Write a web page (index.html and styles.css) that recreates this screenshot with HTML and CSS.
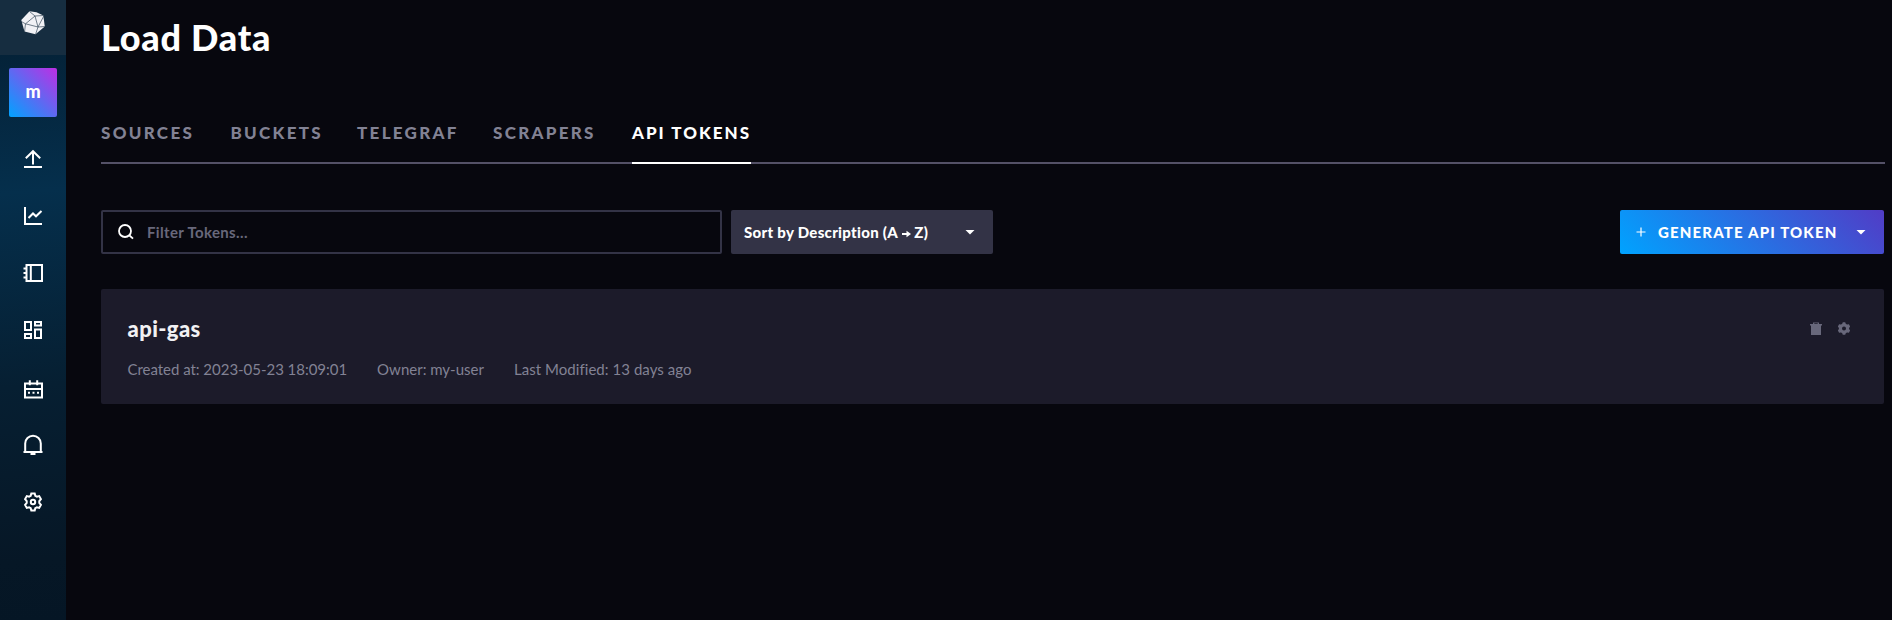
FILE: index.html
```html
<!DOCTYPE html>
<html lang="en">
<head>
<meta charset="utf-8">
<title>Load Data</title>
<link rel="stylesheet" href="styles.css">
</head>
<body>
<div class="app">
  <nav class="sidebar">
    <a class="logo">
      <svg width="24" height="24" viewBox="0 0 24 24">
        <path fill="#f1f1f5" d="M8.500.2 15.500 1.200 22.300 4.500 23.800 15.500 14.500 23.300 3.500 20.500.3 9z"/>
        <path fill="none" stroke="#37495a" stroke-width=".7" d="M8.500.5 14 5 22.800 4.500M14 5 4.500 12.800 17 16 14 5M.3 10.500 4.500 12.800 3.500 21M17 16 24 15.500M17 16 14.500 23.500M17 16 22.800 5"/>
      </svg>
    </a>
    <div class="avatar">m</div>
    <div class="nav-items">
      <a class="nav-item"><svg width="20" height="20" viewBox="0 0 20 20"><path d="M1 18h18M10 15.500V2.500M2.800 9.200 10 2.200l7.200 7"/></svg></a>
      <a class="nav-item"><svg width="20" height="20" viewBox="0 0 20 20"><path d="M2 1v17h17M5.500 12 10 7.500l3 2.800L18.500 5"/></svg></a>
      <a class="nav-item"><svg width="20" height="20" viewBox="0 0 20 20"><path d="M3.500 2H19v16H3.500zM7.800 2v16M.5 5.500h3M.5 10h3M.5 14.500h3"/></svg></a>
      <a class="nav-item"><svg width="20" height="20" viewBox="0 0 20 20"><path d="M2 2h6v8H2zM12 2h6v3.600h-6zM12 9.500h6V18h-6zM2 14h6v4H2z"/></svg></a>
      <a class="nav-item calendar"><svg width="20" height="20" viewBox="0 0 20 20"><path d="M2 3.500h17v14H2zM2 9h17M6.800 .3v5M14.200.3v5M5 12.700h2M9.500 12.700h2M14 12.700h2"/></svg></a>
      <a class="nav-item"><svg width="20" height="20" viewBox="0 0 20 20"><path d="M.5 17h19M2.200 17V8.500a7.800 7.800 0 0 1 15.600 0V17M7.500 19h5"/></svg></a>
      <a class="nav-item"><svg width="20" height="20" viewBox="0 0 20 20"><path d="M8.300 1.500h3.400l.6 2.300 1.600.9 2.300-.6 1.700 3-1.600 1.900v2l1.600 1.900-1.700 3-2.300-.6-1.600.9-.6 2.300H8.300l-.6-2.300-1.600-.9-2.300.6-1.700-3L3.700 11V9L2.100 7.100l1.700-3 2.300.6 1.600-.9z"/><circle cx="10" cy="10" r="2.200"/></svg></a>
    </div>
  </nav>
  <main class="page">
    <h1 class="title">Load Data</h1>
    <div class="tabs">
      <a class="tab">SOURCES</a>
      <a class="tab">BUCKETS</a>
      <a class="tab">TELEGRAF</a>
      <a class="tab">SCRAPERS</a>
      <a class="tab active">API TOKENS</a>
    </div>
    <div class="toolbar">
      <div class="search">
        <svg width="16" height="16" viewBox="0 0 16 16"><circle cx="7" cy="7" r="6"/><path d="m11 11 4 3.600"/></svg>
        <span>Filter Tokens...</span>
      </div>
      <div class="sort">
        <span class="sort-label">Sort by Description (A <svg class="arrow" width="9" height="8" viewBox="0 0 9 8"><path d="M0 4h6" stroke="#fff" stroke-width="2"/><path d="M4.500.8 9 4 4.500 7.200z" fill="#fff"/></svg> Z)</span>
        <span class="caret"></span>
      </div>
      <button class="generate">
        <svg class="plus" width="10" height="10" viewBox="0 0 10 10"><path d="M5 .5v9M.5 5h9"/></svg>
        <span class="generate-label">GENERATE API TOKEN</span>
        <span class="caret"></span>
      </button>
    </div>
    <section class="card">
      <div class="card-body">
        <h2 class="card-title">api-gas</h2>
        <div class="meta">
          <span class="created">Created at: 2023-05-23 18:09:01</span>
          <span>Owner: my-user</span>
          <span class="modified">Last Modified: 13 days ago</span>
        </div>
      </div>
      <div class="actions">
        <svg width="12" height="13" viewBox="0 0 12 13"><path d="M0 2h3V.5h6V2h3v1.500H0zM4.300 1.300V2h3.400v-.7zM1 3.500h10V13H1z"/></svg>
        <svg width="12" height="13" viewBox="0 0 12 13"><path fill-rule="evenodd" d="M4.800.3h2.400L7.900 2l1.300.6 1.700-.3 1.200 2.100-1 1.500v1.200l1 1.500-1.200 2.100-1.700-.3-1.300.6-.7 1.700H4.800L4.100 11l-1.300-.6-1.700.3L-.1 8.600l1-1.500V5.900l-1-1.500 1.200-2.100 1.700.3L4.100 2zM6 4.500a2 2 0 1 0 0 4 2 2 0 0 0 0-4z"/></svg>
      </div>
    </section>
  </main>
</div>
</body>
</html>
```
FILE: styles.css
```css
* { box-sizing: border-box; }
body { margin: 0; background: #07070e; font-family: Lato, "Open Sans", sans-serif; color: #fff; }
.app { display: flex; height: 620px; overflow: hidden; }

.sidebar { flex: none; width: 66px; background: linear-gradient(175deg, #062236 0%, #042238 8%, #052f4c 31%, #061f32 62%, #061726 90%, #051625 100%); }
.logo { display: flex; justify-content: center; height: 55px; padding-top: 11px; background: #162d40; }
.avatar { display: flex; align-items: center; justify-content: center; width: 48px; height: 49px; margin: 13px 9px 0; padding-bottom: 3px; border-radius: 2px; background: linear-gradient(45deg, #00a3ff, #be2ee4); font-size: 18px; font-weight: 900; }
.nav-items { display: grid; grid-auto-rows: 57.200px; padding-top: 13px; }
.nav-item { display: flex; align-items: center; justify-content: center; }
.nav-item svg { overflow: visible; fill: none; stroke: #fff; stroke-width: 2; }
.calendar { padding-top: 5px; }

.page { flex: none; width: 1784px; margin-left: 35px; }
.title { margin: 15px 0 0; font-size: 36px; line-height: 44px; font-weight: 900; letter-spacing: .75px; white-space: nowrap; }
.tabs { display: grid; grid-template-columns: 129.500px 126.500px 136px 139px 119px; height: 61px; margin-top: 44px; border-bottom: 2px solid #545167; }
.tab { height: 61px; padding-top: 18px; font-size: 17px; line-height: 24px; font-weight: 900; letter-spacing: 2.300px; color: #828294; white-space: nowrap; }
.tab.active { color: #fff; border-bottom: 2px solid #fff; letter-spacing: 2px; }
.toolbar { display: flex; width: 1783px; height: 44px; margin-top: 46px; }
.search { display: flex; align-items: center; width: 621px; padding-left: 15px; border: 2px solid #333346; border-radius: 2px; font-size: 15px; font-weight: 700; letter-spacing: .35px; color: #68687b; }
.search svg { margin-right: 13px; fill: none; stroke: #fff; stroke-width: 1.800; }
.sort { display: flex; align-items: center; justify-content: space-between; width: 262px; margin-left: 9px; padding: 0 18px 0 13px; border-radius: 2px; background: #333346; font-size: 15px; font-weight: 900; letter-spacing: .3px; white-space: nowrap; }
.caret { width: 10px; height: 5px; background: #fff; clip-path: polygon(0 0, 100% 0, 50% 100%); }
.generate { display: flex; align-items: center; width: 264px; margin-left: auto; padding: 0 18px 0 16px; border: 0; border-radius: 2px; background: linear-gradient(45deg, #00a3ff, #513cc6); color: #fff; font: 900 15px Lato, "Open Sans", sans-serif; letter-spacing: 1.150px; white-space: nowrap; }
.plus { margin-right: 12px; stroke: #fff; stroke-width: 1.200; }
.generate .caret { margin-left: auto; }
.card { display: flex; justify-content: space-between; width: 1783px; height: 115px; margin-top: 35px; padding: 27px 34px 0 26.500px; border-radius: 2px; background: #1c1b2a; }
.card-title { margin: 0; font-size: 22px; line-height: 26px; font-weight: 900; letter-spacing: .4px; color: #f1f1f3; }
.meta { display: flex; gap: 30px; margin-top: 16px; font-size: 15px; line-height: 22px; color: #828294; white-space: nowrap; }
.created { letter-spacing: -.030px; }
.modified { letter-spacing: .050px; }
.actions { display: flex; gap: 16.500px; padding-top: 6px; }
.actions svg { fill: #68687b; overflow: visible; }
```
